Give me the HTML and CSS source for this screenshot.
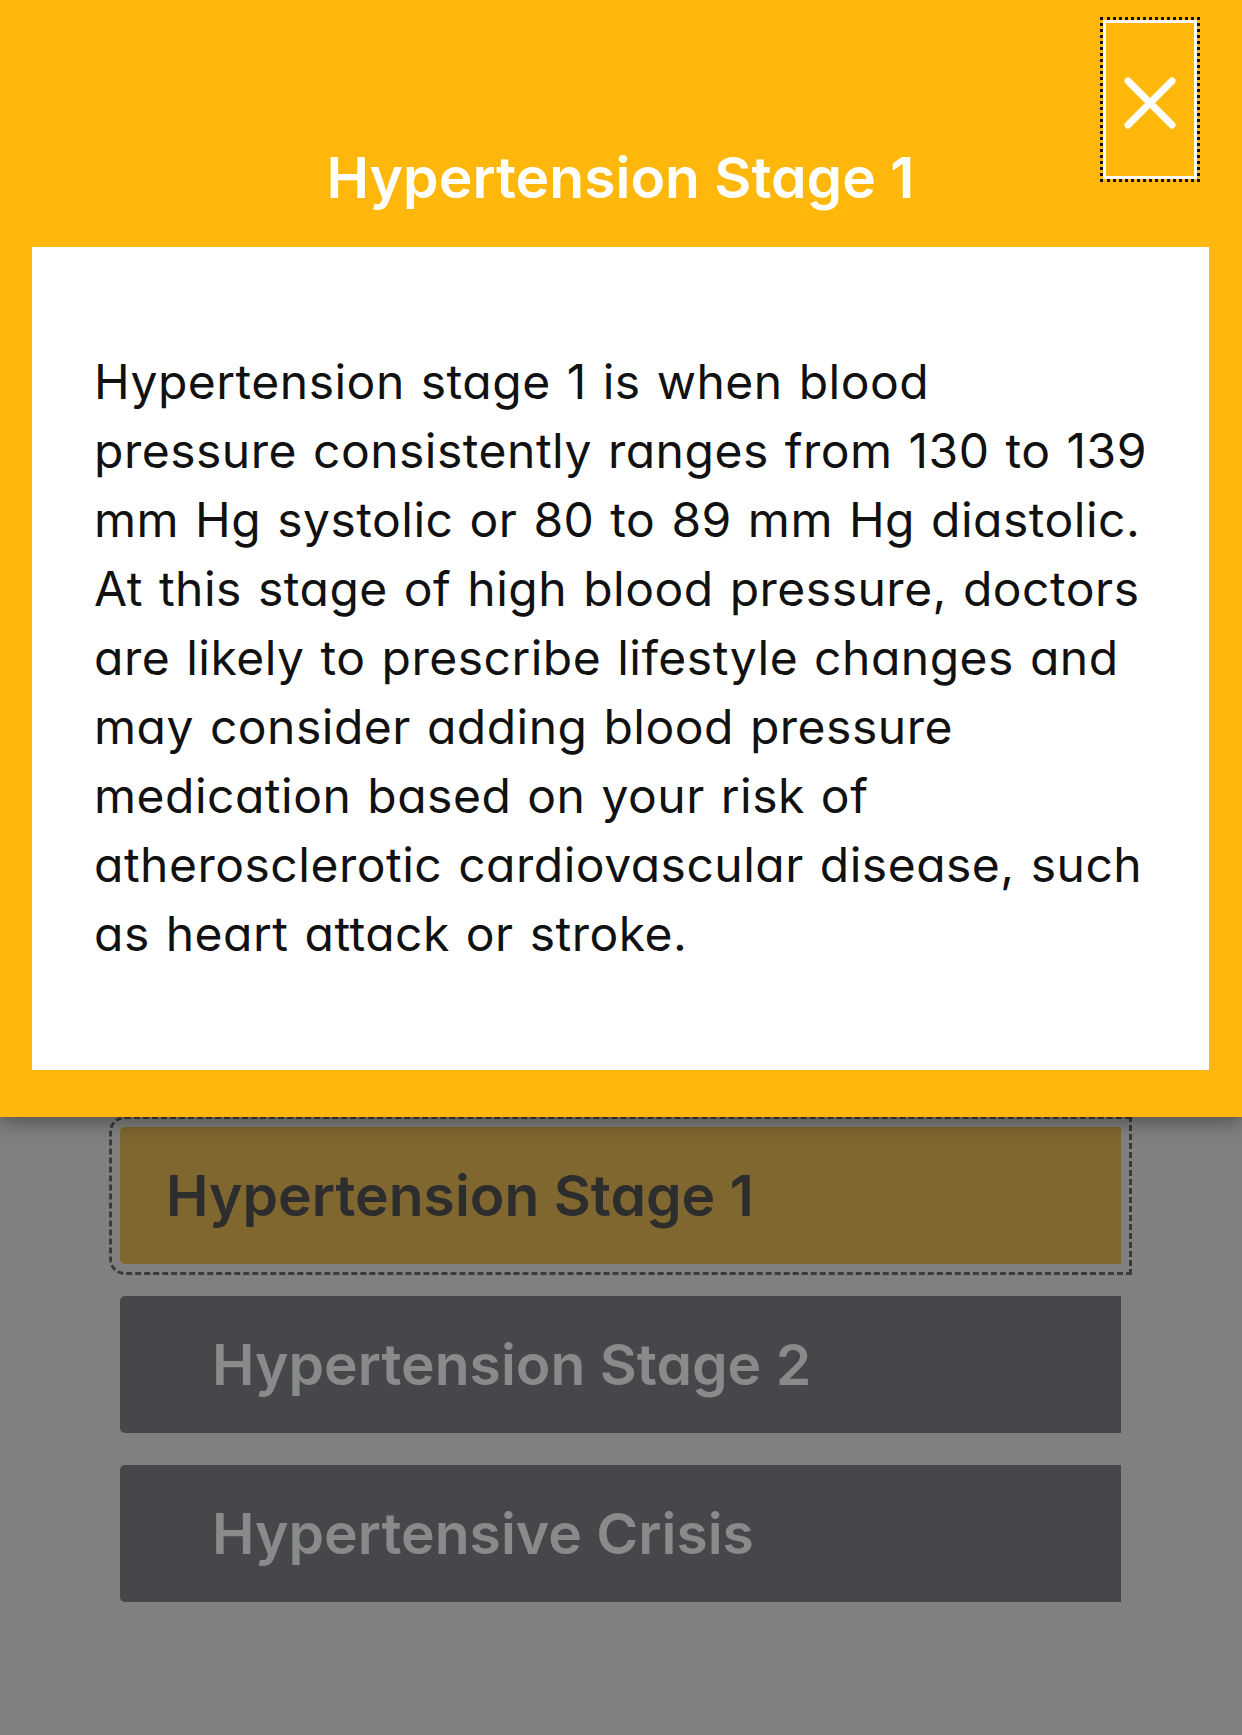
FILE: index.html
```html
<!DOCTYPE html>
<html lang="en">
<head>
<meta charset="utf-8">
<title>Hypertension Stage 1</title>
<link rel="stylesheet" href="styles.css">
</head>
<body>
<div class="page">
  <section class="modal">
    <header class="modal-head">
      <h1 class="modal-title">Hypertension Stage 1</h1>
      <button class="close-btn" aria-label="Close">
        <svg class="close-icon" viewBox="0 0 52 52" width="52" height="52">
          <path d="M4 4 L48 48 M48 4 L4 48" stroke="#fff" stroke-width="7" stroke-linecap="round" fill="none"/>
        </svg>
      </button>
    </header>
    <div class="modal-body">
      <p class="modal-text">Hypertension stage 1 is when blood<br>pressure consistently ranges from 130 to 139<br>mm Hg systolic or 80 to 89 mm Hg diastolic.<br>At this stage of high blood pressure, doctors<br>are likely to prescribe lifestyle changes and<br>may consider adding blood pressure<br>medication based on your risk of<br>atherosclerotic cardiovascular disease, such<br>as heart attack or stroke.</p>
    </div>
  </section>
  <ul class="stage-list">
    <li class="stage stage-active"><span>Hypertension Stage 1</span></li>
    <li class="stage"><span>Hypertension Stage 2</span></li>
    <li class="stage"><span>Hypertensive Crisis</span></li>
  </ul>
</div>
</body>
</html>
```
FILE: styles.css
```css
html, body {
  margin: 0;
  padding: 0;
}
body {
  background: #808080;
  width: 1242px;
  height: 1735px;
  overflow: hidden;
  font-family: "Inter", "Liberation Sans", sans-serif;
  font-feature-settings: "cv11" 1;
}
.page {
  display: flex;
  flex-direction: column;
}
.modal {
  position: relative;
  z-index: 2;
  background: #ffb70b;
  padding: 0 33px 47px 32px;
  box-shadow: 0 6px 18px rgba(0, 0, 0, 0.35);
}
.modal-head {
  position: relative;
  height: 247px;
  display: flex;
  align-items: flex-start;
  justify-content: center;
}
.modal-title {
  margin: 0;
  padding-top: 143px;
  color: #ffffff;
  font-size: 57px;
  font-weight: 600;
  line-height: 70px;
  letter-spacing: 0;
}
.close-btn {
  position: absolute;
  top: 20px;
  right: 12px;
  width: 94px;
  height: 159px;
  box-sizing: border-box;
  background: transparent;
  border: 3px solid #ffffff;
  outline: 3px dotted #111111;
  outline-offset: 0;
  display: flex;
  align-items: center;
  justify-content: center;
  padding: 7px 0 0 0;
}
.close-icon {
  display: block;
}
.modal-body {
  background: #ffffff;
  height: 823px;
  box-sizing: border-box;
  padding: 100px 40px 0 62px;
}
.modal-text {
  margin: 0;
  color: #111111;
  font-size: 48px;
  line-height: 69px;
  font-weight: 400;
  letter-spacing: 0.5px;
  word-spacing: 2px;
  white-space: nowrap;
}
.stage-list {
  list-style: none;
  margin: 0;
  padding: 10px 0 0 120px;
  width: 1001px;
  display: flex;
  flex-direction: column;
  gap: 32px;
}
.stage {
  height: 137px;
  border-radius: 5px 0 0 5px;
  background: #46474a;
  color: #8a8a8a;
  display: flex;
  align-items: center;
  padding-left: 92px;
  font-size: 57px;
  font-weight: 600;
}
.stage-active {
  background: #7f672f;
  color: #2e2d2d;
  padding-left: 46px;
  outline: 3px dashed #3b3b3b;
  outline-offset: 8px;
}
```
